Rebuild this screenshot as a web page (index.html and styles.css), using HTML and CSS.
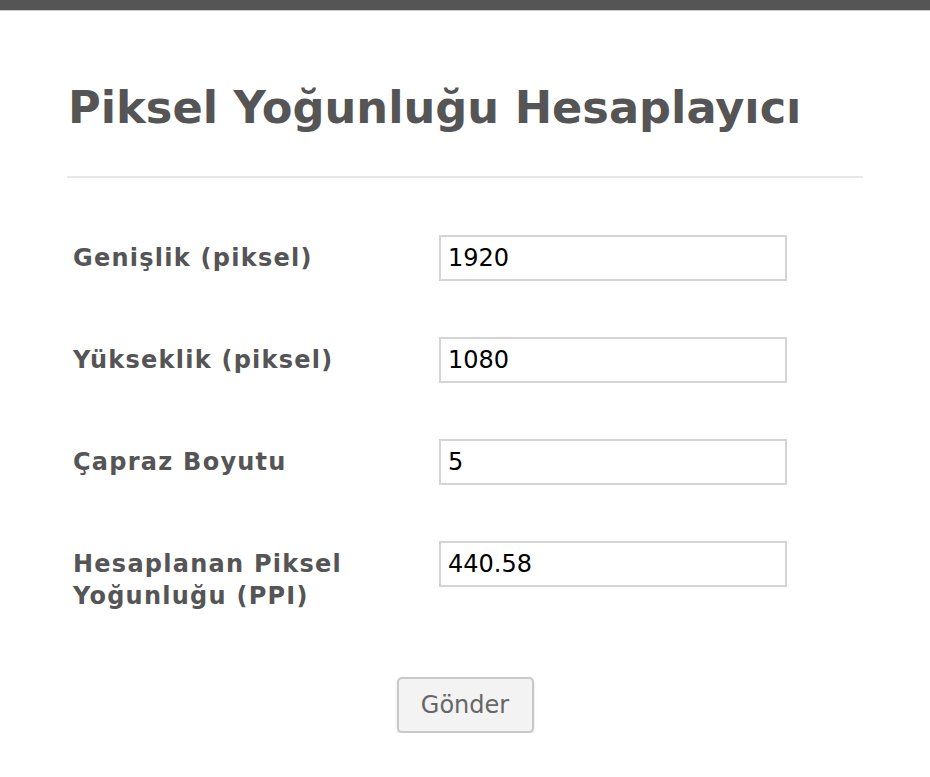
FILE: index.html
```html
<!DOCTYPE html>
<html lang="tr">
<head>
<meta charset="utf-8">
<title>Piksel Yoğunluğu Hesaplayıcı</title>
<link rel="stylesheet" href="styles.css">
</head>
<body>
<div class="topbar"></div>
<div class="container">
  <h1 class="title">Piksel Yoğunluğu Hesaplayıcı</h1>
  <hr class="divider">
  <form class="form">
    <div class="row">
      <label class="label" for="w">Genişlik (piksel)</label>
      <input class="field" id="w" type="text" value="1920">
    </div>
    <div class="row">
      <label class="label" for="h">Yükseklik (piksel)</label>
      <input class="field" id="h" type="text" value="1080">
    </div>
    <div class="row">
      <label class="label" for="d">Çapraz Boyutu</label>
      <input class="field" id="d" type="text" value="5">
    </div>
    <div class="row row-last">
      <label class="label" for="p">Hesaplanan Piksel Yoğunluğu (PPI)</label>
      <input class="field" id="p" type="text" value="440.58">
    </div>
    <div class="actions">
      <button class="button" type="button">Gönder</button>
    </div>
  </form>
</div>
</body>
</html>
```
FILE: styles.css
```css
html, body {
  margin: 0;
  padding: 0;
  background: #fff;
}
body {
  font-family: "DejaVu Sans", Verdana, sans-serif;
  color: #555;
}
.topbar {
  height: 10px;
  background: #555;
  border-bottom: 1px solid #ccc;
}
.container {
  width: 796px;
  margin: 0 auto;
}
.title {
  margin: 0;
  padding-top: 69px;
  font-size: 44.7px;
  font-weight: bold;
  line-height: 56px;
  color: #555;
  padding-left: 1px;
  white-space: nowrap;
}
.divider {
  margin: 40px 0 0 0;
  border: 0;
  height: 2px;
  background: #e8e8e8;
}
.form {
  padding: 57px 0 0 6px;
}
.row {
  display: grid;
  grid-template-columns: 366px 348px;
  align-items: start;
  margin-bottom: 56px;
}
.row-last {
  margin-bottom: 0;
}
.label {
  font-size: 24px;
  font-weight: bold;
  line-height: 32px;
  letter-spacing: 1.25px;
  padding-top: 7px;
  color: #555;
}
.field {
  box-sizing: border-box;
  width: 348px;
  height: 46px;
  border: 2px solid #d4d4d4;
  padding: 0 7px;
  font-family: "DejaVu Sans", Verdana, sans-serif;
  font-size: 24px;
  color: #000;
  background: #fff;
  outline: none;
}
.actions {
  display: flex;
  justify-content: center;
  padding-right: 6px;
  margin-top: 65px;
}
.button {
  box-sizing: border-box;
  width: 137px;
  height: 56px;
  border: 2px solid #c8c8c8;
  border-radius: 5px;
  background: #f3f3f3;
  box-shadow: 0 2px 3px rgba(0,0,0,0.12);
  font-family: "DejaVu Sans", Verdana, sans-serif;
  font-size: 24px;
  color: #666;
}
```
